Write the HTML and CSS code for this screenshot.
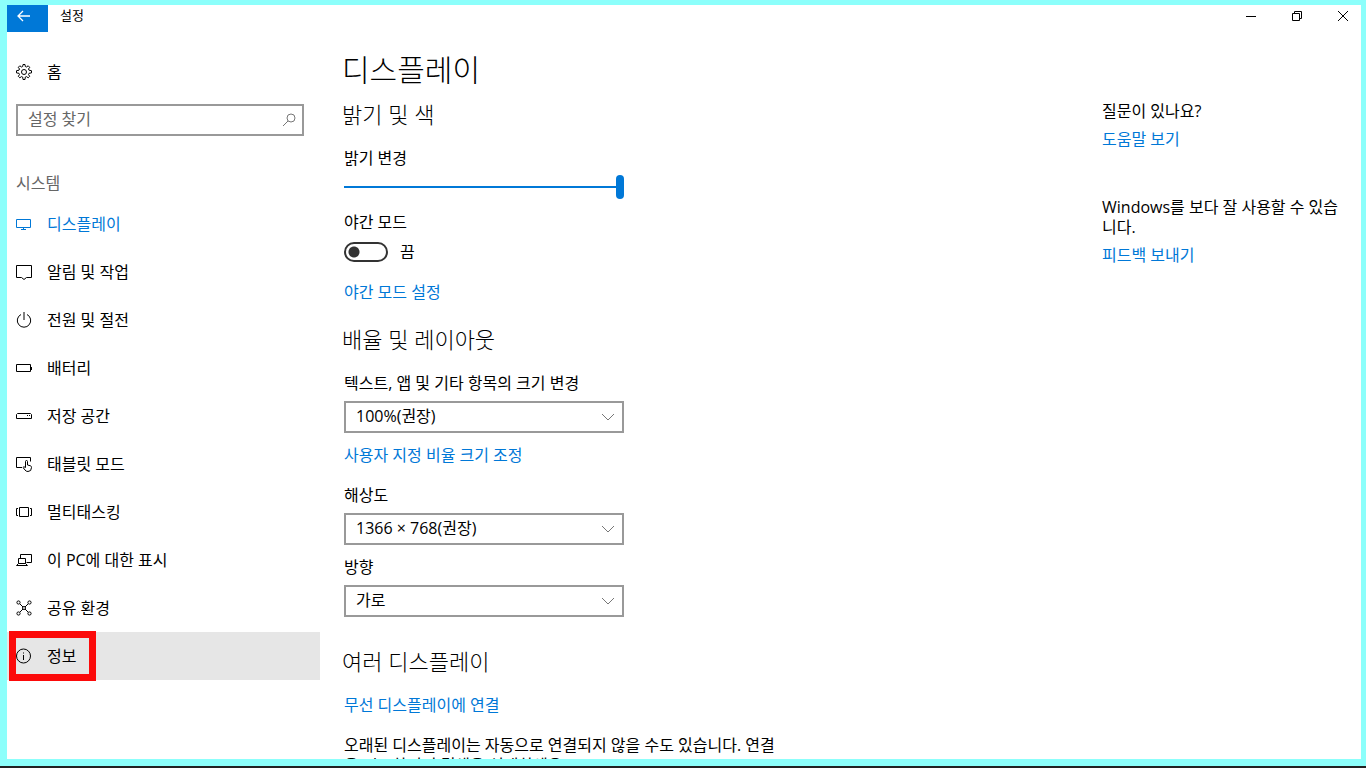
FILE: index.html
```
<!DOCTYPE html>
<html lang="ko">
<head>
    <meta charset="UTF-8">
    <meta name="viewport" content="width=device-width, initial-scale=1.0">
    <title>설정</title>
    <link rel="stylesheet" href="styles.css">
</head>
<body>

<div class="window">
    <!-- Title bar -->
    <header class="titlebar">
        <button class="back" aria-label="뒤로">
            <svg width="14" height="12" viewBox="0 0 14 12"><path stroke-width="1.300" d="M13 6H1M6 1L1 6l5 5"/></svg>
        </button>
        <span class="caption">설정</span>
        <div class="controls">
            <button aria-label="최소화"><svg width="12" height="12" viewBox="0 0 12 12"><path d="M1 6.500h10"/></svg></button>
            <button aria-label="이전 크기로"><svg width="12" height="12" viewBox="0 0 12 12"><path d="M1.500 3.500h7v7h-7zM3.500 3.500v-2h7v7h-2"/></svg></button>
            <button aria-label="닫기"><svg width="12" height="12" viewBox="0 0 12 12"><path d="M1 1l10 10M11 1L1 11"/></svg></button>
        </div>
    </header>

    <div class="layout">
        <!-- Sidebar -->
        <nav class="sidebar">
            <a href="#" class="item home">
                <svg viewBox="0 0 16 16"><path d="M6.700 2.500L7 .5h2l.3 2 1.200.5 1.700-1.200 1.500 1.500L12.500 5l.5 1.200 2.500.5v2.200l-2.500.4-.5 1.300 1.200 1.700-1.500 1.500-1.700-1.200-1.200.5-.3 2.400H7l-.3-2.400-1.200-.5-1.700 1.200-1.500-1.500 1.200-1.700L3 9.300.5 8.900V6.700L3 6.200 3.500 5 2.300 3.300l1.500-1.500L5.500 3z"/><circle cx="8" cy="8" r="2.500"/></svg>
                <span>홈</span>
            </a>
            <div class="search">
                <input type="text" placeholder="설정 찾기" aria-label="설정 찾기">
                <svg viewBox="0 0 16 16"><circle cx="10" cy="6" r="4"/><path d="M7 9l-5 5"/></svg>
            </div>
            <h2 class="group">시스템</h2>
            <a href="#" class="item active">
                <svg viewBox="0 0 16 16"><path d="M.5 3.500h14v8H.5zM7.500 11.500v2M5 13.500h5"/></svg>
                <span>디스플레이</span>
            </a>
            <a href="#" class="item">
                <svg viewBox="0 0 16 16"><path d="M.5 1.500h15v12h-5L8 15.500l-2.500-2h-5z"/></svg>
                <span>알림 및 작업</span>
            </a>
            <a href="#" class="item">
                <svg viewBox="0 0 16 16"><path d="M5 2.500a6.700 6.700 0 1 0 6 0M8 0v8"/></svg>
                <span>전원 및 절전</span>
            </a>
            <a href="#" class="item">
                <svg viewBox="0 0 16 16"><path d="M.5 4.500h14v7H.5zM15.500 7v3"/></svg>
                <span>배터리</span>
            </a>
            <a href="#" class="item">
                <svg viewBox="0 0 16 16"><path d="M1.500 5.500h13l1 1v4H.5v-4zM11 7.500h1M13 7.500h1"/></svg>
                <span>저장 공간</span>
            </a>
            <a href="#" class="item">
                <svg viewBox="0 0 16 16"><path d="M6 11.500H.5v-10h14v4M9.500 11V5.500q0-1 1-1t1 1V9l3 .8q1 .3 1 1.700 0 4-3.500 4-2 0-3-1.500L7 11.500q.5-1.500 2.500 0z"/></svg>
                <span>태블릿 모드</span>
            </a>
            <a href="#" class="item">
                <svg viewBox="0 0 16 16"><path d="M3.500 3.500h9v9h-9zM2 4.500H.5v7H2M14 4.500h1.500v7H14"/></svg>
                <span>멀티태스킹</span>
            </a>
            <a href="#" class="item">
                <svg viewBox="0 0 16 16"><path d="M4.500 6.500v-4h11v8h-5M2.500 6.500h7v5h-7zM2.500 11.500l-2 2h11l-2-2"/></svg>
                <span>이 PC에 대한 표시</span>
            </a>
            <a href="#" class="item">
                <svg viewBox="0 0 16 16"><circle cx="2.500" cy="2.500" r="1.600"/><circle cx="13.500" cy="2.500" r="1.600"/><circle cx="2.500" cy="13.500" r="1.600"/><circle cx="13.500" cy="13.500" r="1.600"/><circle cx="8" cy="8" r="1.500"/><path d="M4 4l3 3M12 4L9 7M4 12l3-3M12 12L9 9"/></svg>
                <span>공유 환경</span>
            </a>
            <a href="#" class="item selected">
                <svg viewBox="0 0 16 16"><circle cx="7.500" cy="8" r="7"/><path d="M7.500 7v5M7.500 4.500v1"/></svg>
                <span>정보</span>
            </a>
        </nav>

        <!-- Display settings -->
        <main class="content">
            <h1>디스플레이</h1>

            <section>
                <h2>밝기 및 색</h2>
                <label for="brightness">밝기 변경</label>
                <input type="range" id="brightness" min="0" max="100" value="100">
                <label for="night">야간 모드</label>
                <div class="toggle">
                    <input type="checkbox" id="night" role="switch">
                    <span>끔</span>
                </div>
                <a href="#">야간 모드 설정</a>
            </section>

            <section>
                <h2>배율 및 레이아웃</h2>
                <label for="scale">텍스트, 앱 및 기타 항목의 크기 변경</label>
                <div class="dropdown">
                    <select id="scale"><option>100%(권장)</option></select>
                    <svg viewBox="0 0 12 8"><path d="M0 1l6 6 6-6"/></svg>
                </div>
                <a href="#" class="custom">사용자 지정 비율 크기 조정</a>
                <label for="resolution">해상도</label>
                <div class="dropdown">
                    <select id="resolution"><option>1366 × 768(권장)</option></select>
                    <svg viewBox="0 0 12 8"><path d="M0 1l6 6 6-6"/></svg>
                </div>
                <label for="orientation">방향</label>
                <div class="dropdown">
                    <select id="orientation"><option>가로</option></select>
                    <svg viewBox="0 0 12 8"><path d="M0 1l6 6 6-6"/></svg>
                </div>
            </section>

            <section>
                <h2>여러 디스플레이</h2>
                <a href="#">무선 디스플레이에 연결</a>
                <p>오래된 디스플레이는 자동으로 연결되지 않을 수도 있습니다. 연결<br>을 시도하려면 검색을 선택하세요.</p>
            </section>
        </main>

        <!-- Help links -->
        <aside class="help">
            <p>질문이 있나요?</p>
            <a href="#">도움말 보기</a>
            <p class="feedback">Windows를 보다 잘 사용할 수 있습니다.</p>
            <a href="#">피드백 보내기</a>
        </aside>
    </div>
</div>

</body>
</html>
```

FILE: styles.css
```
/* General styling */
*,
*::before,
*::after {
    box-sizing: border-box;
}

body {
    margin: 0;
    height: 100vh;
    overflow: hidden;
    background-color: #222;
    border-bottom: 2px solid #222;
    font-family: "Open Sans", "Noto Sans CJK KR", sans-serif;
    font-size: 16px;
    font-weight: 400;
    line-height: 20px;
    color: #000;
}

h1, h2, p {
    margin: 0;
    font-weight: 400;
}

a {
    color: #0078d7;
    text-decoration: none;
}

button {
    padding: 0;
    border: none;
    background: none;
}

svg {
    display: block;
    fill: none;
    stroke: currentColor;
}

.window {
    height: 100%;
    display: flex;
    flex-direction: column;
    overflow: hidden;
    border: solid #8cfffb;
    border-width: 5px 5px 7px 7px;
    background-color: #fff;
}

/* Title bar */
.titlebar {
    display: flex;
    height: 27px;
    flex-shrink: 0;
}

.back {
    width: 41px;
    padding: 0 0 6px 10px;
    background-color: #0078d7;
    color: #fff;
}

.caption {
    margin-left: 12px;
    font-size: 13px;
}

.controls {
    display: flex;
    margin-left: auto;
}

.controls button {
    width: 46px;
    padding: 0 0 6px 22px;
}

.layout {
    display: flex;
    flex: 1;
    min-height: 0;
}

/* Sidebar */
.sidebar {
    width: 313px;
    flex-shrink: 0;
    padding-top: 16px;
}

.item {
    display: flex;
    align-items: center;
    gap: 15px;
    height: 48px;
    padding-left: 9px;
    color: #000;
}

.item svg {
    width: 16px;
    height: 16px;
}

.active {
    color: #0078d7;
}

.selected {
    position: relative;
    background-color: #e6e6e6;
}

.selected::after {
    content: "";
    position: absolute;
    top: -1px;
    left: 2px;
    width: 87px;
    height: 50px;
    border: 7px solid #fc0a0a;
}

.search {
    position: relative;
    margin: 8px 16px 35px 9px;
}

.search input {
    display: block;
    width: 100%;
    height: 32px;
    padding: 0 36px 2px 10px;
    border: 2px solid #999;
    font: inherit;
}

.search input::placeholder {
    color: #666;
    opacity: 1;
}

.search svg {
    position: absolute;
    top: 8px;
    right: 7px;
    width: 16px;
    height: 16px;
    color: #777;
}

.group {
    height: 29px;
    padding-left: 9px;
    font-size: 16px;
    line-height: 24px;
    color: #666;
}

/* Display settings */
.content {
    width: 472px;
    margin-left: 24px;
    padding-top: 18px;
}

.content h1,
.content h2 {
    margin-left: -2px;
    font-weight: 300;
}

.content h1 {
    font-size: 30px;
    line-height: 40px;
}

.content h2 {
    margin-bottom: 20px;
    font-size: 22px;
    line-height: 28px;
}

.content h1 + section h2 {
    margin-top: 10px;
}

.content section {
    margin-bottom: 23px;
}

.content label,
.content section > a {
    display: block;
}

input[type="range"] {
    appearance: none;
    display: block;
    width: 280px;
    height: 24px;
    margin: 7px 0 13px;
    background: linear-gradient(#0078d7, #0078d7) center / 100% 2px no-repeat;
}

input[type="range"]::-webkit-slider-thumb {
    appearance: none;
    width: 8px;
    height: 24px;
    border-radius: 4px;
    background-color: #0078d7;
}

.toggle {
    display: flex;
    align-items: center;
    gap: 12px;
    margin: 10px 0 20px;
}

.toggle input {
    appearance: none;
    width: 44px;
    height: 20px;
    margin: 0;
    border: 2px solid #333;
    border-radius: 10px;
    background: radial-gradient(circle at 8px 8px, #333 5px, transparent 6px);
}

.dropdown {
    position: relative;
    width: 280px;
    margin: 8px 0 12px;
}

.dropdown:last-child {
    margin-bottom: 30px;
}

.dropdown select {
    appearance: none;
    display: block;
    width: 100%;
    height: 32px;
    padding: 0 32px 2px 10px;
    border: 2px solid #999;
    border-radius: 0;
    background-color: #fff;
    font: inherit;
    color: #000;
}

.dropdown svg {
    position: absolute;
    top: 12px;
    right: 10px;
    width: 12px;
    height: 8px;
    color: #777;
}

.content .custom {
    margin-bottom: 20px;
}

.content p {
    margin-top: 20px;
    white-space: nowrap;
}

/* Help links */
.help {
    width: 244px;
    margin-left: auto;
    margin-right: 15px;
    padding-top: 69px;
}

.help a {
    display: block;
    margin-top: 8px;
}

.feedback {
    margin-top: 48px;
    word-break: break-all;
}
```
